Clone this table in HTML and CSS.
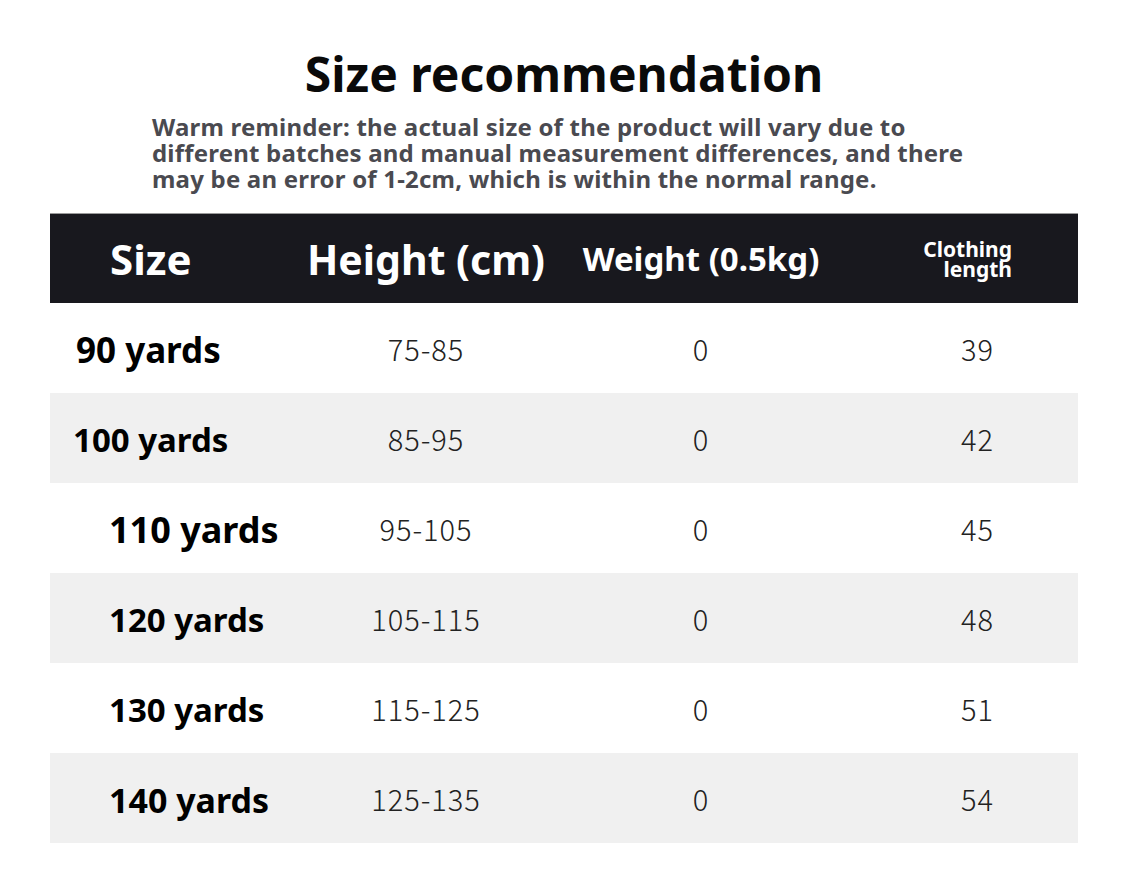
FILE: index.html
```html
<!DOCTYPE html>
<html lang="en">
<head>
<meta charset="utf-8">
<title>Size recommendation</title>
<link rel="stylesheet" href="styles.css">
</head>
<body>
<main class="page">
  <h1 class="title">Size recommendation</h1>
  <p class="note">Warm reminder: the actual size of the product will vary due to<br>different batches and manual measurement differences, and there<br>may be an error of 1-2cm, which is within the normal range.</p>
  <section class="table">
    <div class="row head">
      <div class="cell c1 h-size">Size</div>
      <div class="cell c2 h-height">Height (cm)</div>
      <div class="cell c3 h-weight">Weight (0.5kg)</div>
      <div class="cell c4 h-length"><span>Clothing<br>length</span></div>
    </div>
    <div class="row">
      <div class="cell c1 size s90">90 yards</div>
      <div class="cell c2 num">75-85</div>
      <div class="cell c3 num">0</div>
      <div class="cell c4 num">39</div>
    </div>
    <div class="row alt">
      <div class="cell c1 size s100">100 yards</div>
      <div class="cell c2 num">85-95</div>
      <div class="cell c3 num">0</div>
      <div class="cell c4 num">42</div>
    </div>
    <div class="row">
      <div class="cell c1 size s110">110 yards</div>
      <div class="cell c2 num">95-105</div>
      <div class="cell c3 num">0</div>
      <div class="cell c4 num">45</div>
    </div>
    <div class="row alt">
      <div class="cell c1 size s120">120 yards</div>
      <div class="cell c2 num">105-115</div>
      <div class="cell c3 num">0</div>
      <div class="cell c4 num">48</div>
    </div>
    <div class="row">
      <div class="cell c1 size s130">130 yards</div>
      <div class="cell c2 num">115-125</div>
      <div class="cell c3 num">0</div>
      <div class="cell c4 num">51</div>
    </div>
    <div class="row alt">
      <div class="cell c1 size s140">140 yards</div>
      <div class="cell c2 num">125-135</div>
      <div class="cell c3 num">0</div>
      <div class="cell c4 num">54</div>
    </div>
  </section>
</main>
</body>
</html>
```

FILE: styles.css
```css
html, body {
  margin: 0;
  padding: 0;
  background: #ffffff;
}

body {
  font-family: "Noto Sans", "Noto Sans CJK SC", sans-serif;
  color: #000;
}

.page {
  padding-top: 44px;
}

.title {
  margin: 0;
  text-align: center;
  font-size: 48px;
  line-height: 60px;
  font-weight: 700;
  color: #0a0a0a;
  padding-left: 3px;
}

.note {
  margin: 10px 0 0 152px;
  font-size: 24px;
  line-height: 26px;
  font-weight: 700;
  letter-spacing: 0.2px;
  color: #4a4a50;
}

.table {
  margin: 21px 47px 0 50px;
}

.row {
  display: grid;
  grid-template-columns: 255px 242px 308px 1fr;
  height: 90px;
  align-items: center;
  background: #ffffff;
}

.row.alt {
  background: #f0f0f0;
}

.row.head {
  height: 89px;
  background: #18181e;
  border-top: 1px solid #9a9a9a;
  color: #ffffff;
  font-weight: 700;
}

.cell {
  text-align: center;
  white-space: nowrap;
}

.c1 {
  text-align: left;
}

.c4 {
  padding-left: 22px;
}

.h-size {
  padding-left: 60px;
  font-size: 42px;
}

.h-height {
  font-size: 41px;
}

.h-weight {
  font-size: 33px;
}

.h-length {
  display: flex;
  justify-content: flex-end;
  padding-right: 66px;
  font-size: 21px;
  line-height: 20px;
  text-align: right;
}

.size {
  font-weight: 700;
  color: #000;
  padding-top: 3px;
}

.s90  { padding-left: 26px; font-size: 35px; }
.s100 { padding-left: 23px; font-size: 33px; }
.s110 { padding-left: 59px; font-size: 36px; }
.s120 { padding-left: 59px; font-size: 33px; }
.s130 { padding-left: 59px; font-size: 33px; }
.s140 { padding-left: 59px; font-size: 34px; }

.num {
  font-family: "Noto Sans CJK SC", "Noto Sans", sans-serif;
  font-size: 29px;
  font-weight: 300;
  letter-spacing: 1px;
  color: #222;
}
```
